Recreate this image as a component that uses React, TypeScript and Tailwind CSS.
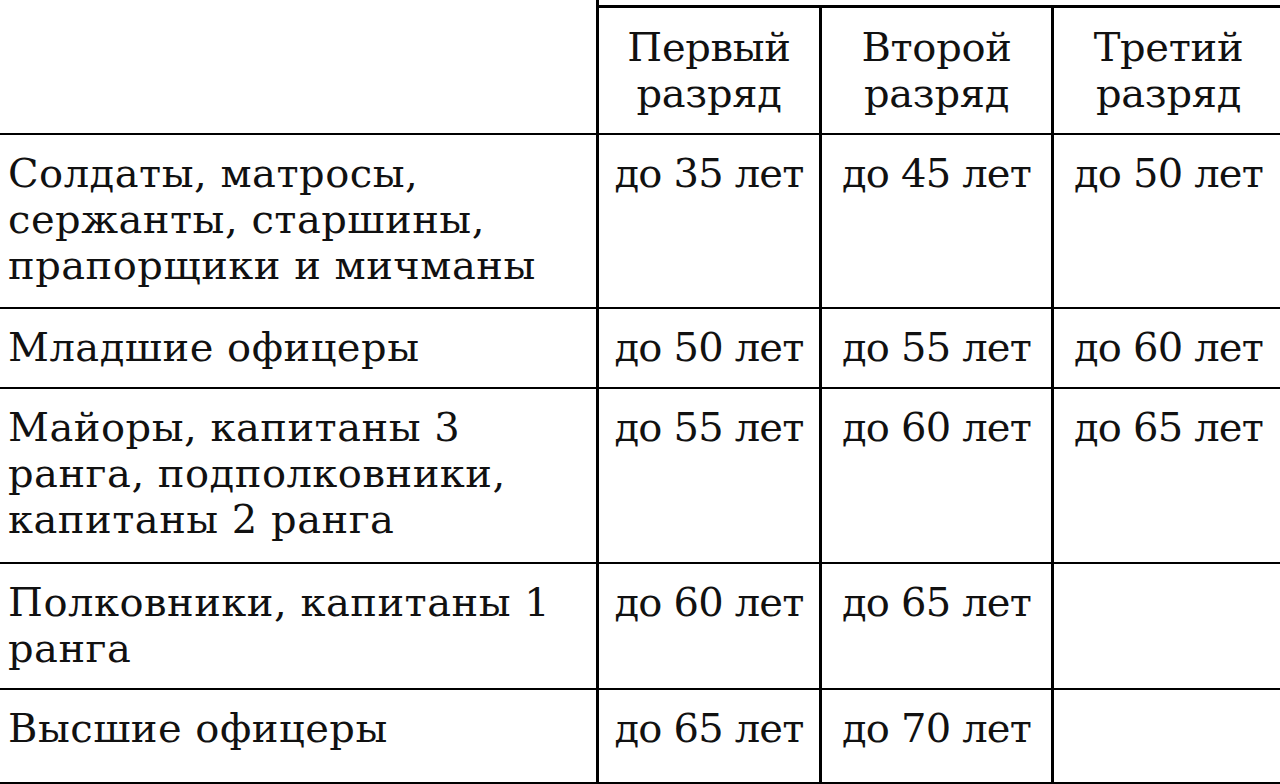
const rows = [
	{ h: 'h-[174px]', label: ['Солдаты, матросы,', 'сержанты, старшины,', 'прапорщики и мичманы'], vals: ['до 35 лет', 'до 45 лет', 'до 50 лет'] },
	{ h: 'h-[80px]', label: ['Младшие офицеры'], vals: ['до 50 лет', 'до 55 лет', 'до 60 лет'] },
	{ h: 'h-[175px]', label: ['Майоры, капитаны 3', 'ранга, подполковники,', 'капитаны 2 ранга'], vals: ['до 55 лет', 'до 60 лет', 'до 65 лет'] },
	{ h: 'h-[126px]', label: ['Полковники, капитаны 1', 'ранга'], vals: ['до 60 лет', 'до 65 лет', ''] },
	{ h: 'h-[94px]', label: ['Высшие офицеры'], vals: ['до 65 лет', 'до 70 лет', ''] }
];

const App = () => {
	return (
		<div
			className="w-full h-[784px] overflow-hidden bg-white text-[#111] text-[40px] leading-[46px]"
			style={{ fontFamily: '"DejaVu Serif", "Liberation Serif", serif' }}
		>
			<div className="w-[1283px]">
				{/* header */}
				<div className="h-[135px] grid grid-cols-[596px_687px] border-b-2 border-black">
					<div />
					<div className="flex flex-col">
						<div className="h-[5px] border-l-[3px] border-black" />
						<div className="flex-1 grid grid-cols-[223px_232px_232px] border-t-[3px] border-black">
							{['Первый', 'Второй', 'Третий'].map((t) => (
								<div key={t} className="border-l-[3px] border-black pt-[16px] text-center tracking-[-0.3px]">
									<div>{t}</div>
									<div>разряд</div>
								</div>
							))}
						</div>
					</div>
				</div>

				{rows.map((r, i) => (
					<div key={i} className={`${r.h} grid grid-cols-[596px_223px_232px_232px] border-b-2 border-black`}>
						<div className="pl-[8px] pt-[15px] tracking-[0.5px]">
							{r.label.map((l) => (
								<div key={l}>{l}</div>
							))}
						</div>
						{r.vals.map((v, j) => (
							<div key={j} className="border-l-[3px] border-black pt-[15px] text-center whitespace-nowrap tracking-[-0.8px]">
								{v}
							</div>
						))}
					</div>
				))}
			</div>
		</div>
	);
};

export default App;
